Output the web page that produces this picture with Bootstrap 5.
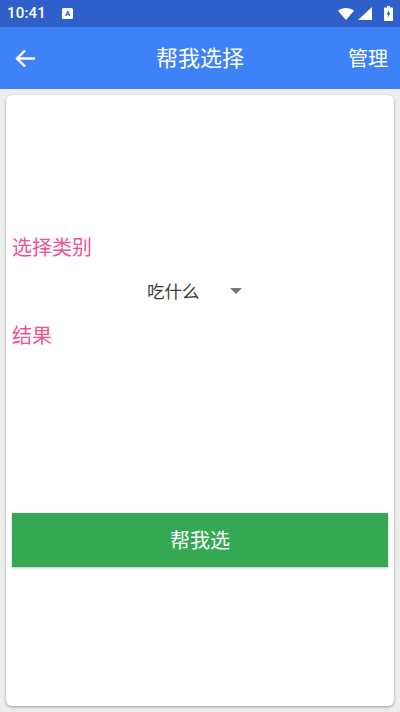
<!DOCTYPE html>
<html lang="zh">
<head>
<meta charset="utf-8">
<title>帮我选择</title>
<link href="https://cdn.jsdelivr.net/npm/bootstrap@5.3.0/dist/css/bootstrap.min.css" rel="stylesheet">
<style>
html, body { height: 712px; overflow: hidden; }
body { background: #eeeeee; font-family: "Noto Sans CJK SC", "Roboto", sans-serif; }
.stat-bar { height: 27px; background: #2f60c9; color: #fff; padding: 0 7px 0 7px; }
.stat-time { font-family: Roboto, sans-serif; font-size: 15px; font-weight: 500; line-height: 1; letter-spacing: .2px; }
.stat-a { width: 11px; height: 11px; margin-left: 16px; background: #fff; color: #2f60c9; border-radius: 1.5px; font: 700 8px/11px Roboto, sans-serif; text-align: center; }
.app-head { height: 62px; background: #3e82f7; color: #fff; padding: 0 12px 0 15px; }
.app-title { font-size: 22px; line-height: 1; font-weight: 400; left: 0; right: 0; top: 31px; margin-top: -13px; text-align: center; }
.app-manage { font-size: 20px; line-height: 1; }
.sheet { height: 611px; margin: 6px 6px 0; border: 0; border-radius: 6px; box-shadow: 0 1px 3px rgba(0,0,0,.35); padding: 0 6px; }
.spacer-top { height: 138px; }
.pink-label { color: #f4508f; font-size: 20px; line-height: 28px; }
.pick-row { height: 60px; padding-right: 11px; }
.pick-text { color: #3c3c3c; font-size: 17.5px; line-height: 1; width: 83px; }
.pick-caret { width: 0; height: 0; border-left: 6px solid transparent; border-right: 6px solid transparent; border-top: 6px solid #757575; }
.spacer-mid { height: 164px; }
.go-btn { height: 54px; background: #34a853; color: #fff; font-size: 20px; line-height: 1; border: 0; border-radius: 0; box-shadow: 0 1px 2px rgba(0,0,0,.25); }
.go-btn:hover, .go-btn:active { background: #34a853 !important; color: #fff !important; }
.status-icons { gap: 4px; }
</style>
</head>
<body>
<div class="stat-bar d-flex align-items-center justify-content-between">
  <div class="d-flex align-items-center">
    <span class="stat-time">10:41</span>
    <span class="stat-a">A</span>
  </div>
  <div class="status-icons d-flex align-items-center">
    <svg width="16" height="12" viewBox="0 0 16 12"><path d="M0 2.8C2.2 1 5 0 8 0s5.800 1 8 2.800L8 12z" fill="#fff"/></svg>
    <svg width="14" height="13" viewBox="0 0 14 13"><path d="M14 0v13H0z" fill="#fff"/></svg>
    <svg width="9" height="15" viewBox="0 0 9 15" class="ms-2"><path d="M3 0h3v1.500h2.200a.8.8 0 0 1 .8.800V14.200a.8.8 0 0 1-.8.800H.8a.8.800 0 0 1-.8-.800V2.300a.8.800 0 0 1 .8-.800H3z" fill="#fff"/><path d="M5 3.500 2.500 8.500h1.800L3.700 12 6.500 6.800H4.700z" fill="#2f60c9"/></svg>
  </div>
</div>
<header class="app-head d-flex align-items-center justify-content-between position-relative">
  <svg width="21" height="19" viewBox="0 0 21 19"><path d="M20 9.500H2.500M10 1.500 2 9.500l8 8" fill="none" stroke="#fff" stroke-width="2.400"/></svg>
  <div class="app-title position-absolute">帮我选择</div>
  <div class="app-manage">管理</div>
</header>
<main class="sheet card">
  <div class="spacer-top"></div>
  <div class="pink-label">选择类别</div>
  <div class="pick-row d-flex align-items-center justify-content-center">
    <span class="pick-text">吃什么</span>
    <span class="pick-caret"></span>
  </div>
  <div class="pink-label">结果</div>
  <div class="spacer-mid"></div>
  <button type="button" class="btn go-btn w-100 d-block">帮我选</button>
</main>
</body>
</html>
